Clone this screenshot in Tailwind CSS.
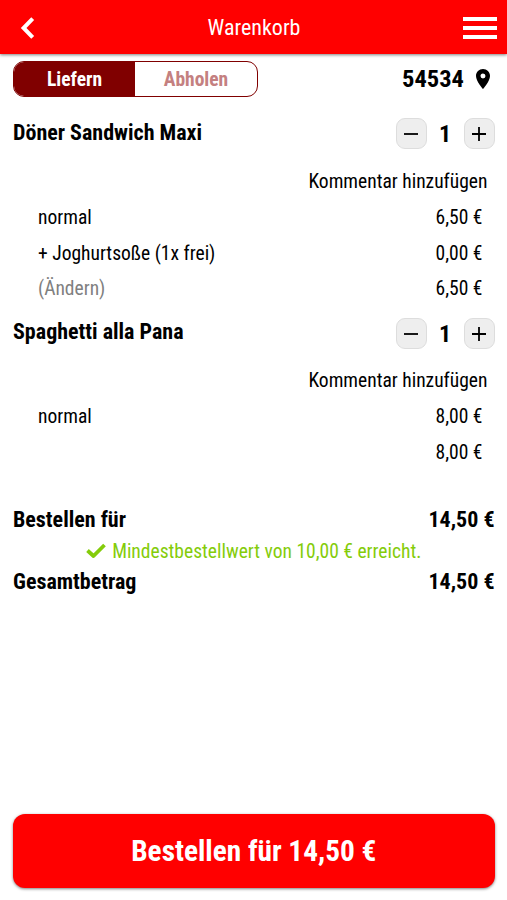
<!DOCTYPE html>
<html lang="de">
  <head>
    <meta charset="UTF-8" />
    <meta name="viewport" content="width=device-width, initial-scale=1" />
    <title>Warenkorb</title>
    <script src="https://cdn.jsdelivr.net/npm/@tailwindcss/browser@4"></script>
  </head>
  <body
    class="h-screen flex flex-col bg-white text-black font-['Roboto_Condensed','Roboto',sans-serif] [font-stretch:75%] text-[19.55px] leading-6 overflow-hidden"
  >
    <header
      class="h-[54px] shrink-0 grid grid-cols-[1fr_auto_1fr] items-center bg-[#ff0000] text-white pl-5 pr-[10px] shadow-[0_1px_3px_rgba(0,0,0,0.5)]"
    >
      <svg class="w-[25px] h-6 mt-0.5" viewBox="0 0 25 24" fill="none" stroke="currentColor" stroke-width="4">
        <path d="M12.7 2.6L3.6 12L12.7 21.4" />
      </svg>
      <h1 class="text-[22px] pt-0.5 -ml-[9px]">Warenkorb</h1>
      <svg class="w-[34px] h-6 mt-0.5 justify-self-end" viewBox="0 0 34 24" fill="currentColor">
        <path d="M0 1h34v4H0zM0 10h34v4H0zM0 19h34v4H0z" />
      </svg>
    </header>

    <main class="flex-1 flex flex-col pl-[13px] pr-[12.5px] pt-[7px]">
      <div class="flex items-center justify-between">
        <div
          class="w-[245px] h-9 flex border border-[#800000] rounded-[11px] overflow-hidden font-bold text-[19.5px]"
        >
          <button class="w-[121px] pt-0.5 bg-[#800000] text-white">Liefern</button>
          <button class="flex-1 pt-0.5 text-[#c48080]">Abholen</button>
        </div>
        <div class="flex items-center gap-3 pr-[4.5px] font-bold text-[24.5px]">
          54534
          <svg class="w-[14px] h-5" viewBox="5 2 14 20" fill="currentColor">
            <path
              d="M12 2C8.13 2 5 5.13 5 9c0 5.25 7 13 7 13s7-7.75 7-13c0-3.87-3.13-7-7-7zm0 9.5a2.5 2.5 0 0 1 0-5 2.5 2.5 0 0 1 0 5z"
            />
          </svg>
        </div>
      </div>

      <!-- Artikel 1 -->
      <section class="mt-[21px]">
        <div class="h-[31px] flex items-center justify-between">
          <h2 class="font-bold text-[22px] -mt-0.5">Döner Sandwich Maxi</h2>
          <div class="flex items-center">
            <button
              class="w-[31px] h-[31px] flex items-center justify-center bg-[#eeeeee] border border-[#dddddd] rounded-[9px]"
            >
              <svg class="w-[14px] h-[14px]" viewBox="0 0 14 14" stroke="currentColor" stroke-width="1.8">
                <path d="M0 7h14" />
              </svg>
            </button>
            <span class="w-[37px] text-center font-bold text-[24px]">1</span>
            <button
              class="w-[31px] h-[31px] flex items-center justify-center bg-[#eeeeee] border border-[#dddddd] rounded-[9px]"
            >
              <svg class="w-[14px] h-[14px]" viewBox="0 0 14 14" stroke="currentColor" stroke-width="1.8">
                <path d="M0 7h14M7 0v14" />
              </svg>
            </button>
          </div>
        </div>
        <div class="mt-[15px] h-9 flex items-center justify-end pr-[7px]">Kommentar hinzufügen</div>
        <div class="pl-[25px] pr-3">
          <div class="h-9 flex items-center justify-between"><span>normal</span><span>6,50 €</span></div>
          <div class="h-[35px] flex items-center justify-between">
            <span>+ Joghurtsoße (1x frei)</span><span>0,00 €</span>
          </div>
          <div class="h-[35px] flex items-center justify-between">
            <a class="text-[#808080]">(Ändern)</a><span>6,50 €</span>
          </div>
        </div>
      </section>

      <!-- Artikel 2 -->
      <section class="mt-3">
        <div class="h-[31px] flex items-center justify-between">
          <h2 class="font-bold text-[22px] -mt-1">Spaghetti alla Pana</h2>
          <div class="flex items-center">
            <button
              class="w-[31px] h-[31px] flex items-center justify-center bg-[#eeeeee] border border-[#dddddd] rounded-[9px]"
            >
              <svg class="w-[14px] h-[14px]" viewBox="0 0 14 14" stroke="currentColor" stroke-width="1.8">
                <path d="M0 7h14" />
              </svg>
            </button>
            <span class="w-[37px] text-center font-bold text-[24px]">1</span>
            <button
              class="w-[31px] h-[31px] flex items-center justify-center bg-[#eeeeee] border border-[#dddddd] rounded-[9px]"
            >
              <svg class="w-[14px] h-[14px]" viewBox="0 0 14 14" stroke="currentColor" stroke-width="1.8">
                <path d="M0 7h14M7 0v14" />
              </svg>
            </button>
          </div>
        </div>
        <div class="mt-[14px] h-9 flex items-center justify-end pr-[7px]">Kommentar hinzufügen</div>
        <div class="pl-[25px] pr-3">
          <div class="h-9 flex items-center justify-between"><span>normal</span><span>8,00 €</span></div>
          <div class="h-9 flex items-center justify-end"><span>8,00 €</span></div>
        </div>
      </section>

      <!-- Summe -->
      <section class="mt-[33px]">
        <div class="h-8 flex items-center justify-between font-bold text-[22px]">
          <span>Bestellen für</span><span>14,50 €</span>
        </div>
        <div class="h-[30px] pt-0.5 flex items-center justify-center gap-1.5 text-[#84cc0a]">
          <svg
            class="w-5 h-4 -mt-0.5"
            viewBox="0 0 20 16"
            fill="none"
            stroke="currentColor"
            stroke-width="3.8"
            stroke-linejoin="round"
          >
            <path d="M1.5 7.5l6 5.5L18.5 2" />
          </svg>
          <span>Mindestbestellwert von 10,00 € erreicht.</span>
        </div>
        <div class="h-8 flex items-center justify-between font-bold text-[22px]">
          <span>Gesamtbetrag</span><span>14,50 €</span>
        </div>
      </section>

      <button
        class="mt-auto mb-[12px] h-[74px] shrink-0 rounded-[12px] bg-[#ff0000] text-white font-bold text-[29.3px] shadow-[0_1px_3px_rgba(0,0,0,0.5)]"
      >
        Bestellen für 14,50 €
      </button>
    </main>
  </body>
</html>
